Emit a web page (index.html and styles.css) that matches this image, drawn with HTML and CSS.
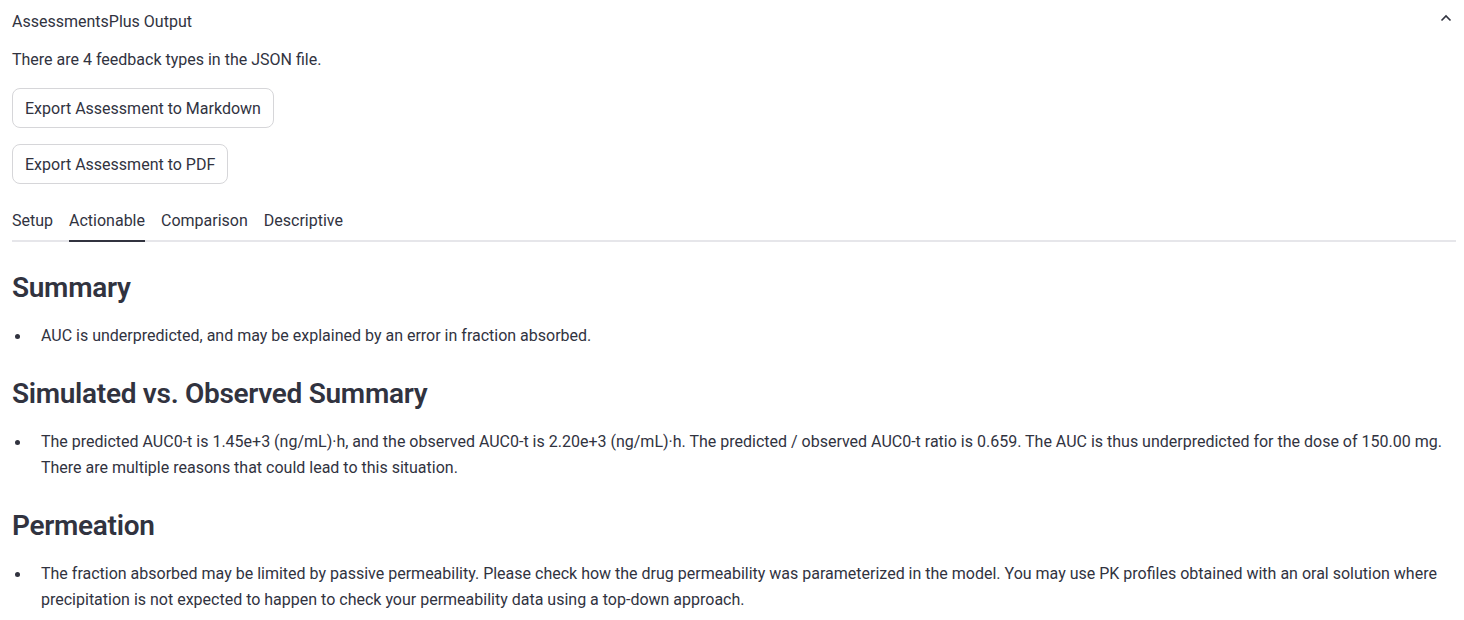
FILE: index.html
```html
<!DOCTYPE html>
<html lang="en">
<head>
    <meta charset="UTF-8">
    <meta name="viewport" content="width=device-width, initial-scale=1.0">
    <title>AssessmentsPlus Output</title>
    <link rel="stylesheet" href="styles.css">
</head>
<body>
    <div class="expander">
        <div class="expander-header">
            <span class="expander-title">AssessmentsPlus Output</span>
            <svg class="chevron" width="16" height="16" viewBox="0 0 16 16">
                <path d="M3.5 10.5 L8 6 L12.5 10.5" fill="none" stroke="#31333f" stroke-width="1.6"/>
            </svg>
        </div>
        <div class="expander-body">
            <p class="info">There are 4 feedback types in the JSON file.</p>
            <div class="btn-row"><button class="btn">Export Assessment to Markdown</button></div>
            <div class="btn-row"><button class="btn">Export Assessment to PDF</button></div>

            <div class="tabs">
                <span class="tab">Setup</span>
                <span class="tab active">Actionable</span>
                <span class="tab">Comparison</span>
                <span class="tab">Descriptive</span>
            </div>

            <div class="tab-content">
                <h2>Summary</h2>
                <ul>
                    <li>AUC is underpredicted, and may be explained by an error in fraction absorbed.</li>
                </ul>

                <h2>Simulated vs. Observed Summary</h2>
                <ul>
                    <li>The predicted AUC0-t is 1.45e+3 (ng/mL)·h, and the observed AUC0-t is 2.20e+3 (ng/mL)·h. The predicted / observed AUC0-t ratio is 0.659. The AUC is thus underpredicted for the dose of 150.00 mg. There are multiple reasons that could lead to this situation.</li>
                </ul>

                <h2>Permeation</h2>
                <ul>
                    <li>The fraction absorbed may be limited by passive permeability. Please check how the drug permeability was parameterized in the model. You may use PK profiles obtained with an oral solution where precipitation is not expected to happen to check your permeability data using a top-down approach.</li>
                </ul>
            </div>
        </div>
    </div>
</body>
</html>
```

FILE: styles.css
```css
body {
    margin: 0;
    background-color: #fff;
    color: #31333f;
    font-family: Roboto, "Liberation Sans", sans-serif;
    font-size: 16px;
}
.expander {
    padding: 0 8px 0 12px;
}
.expander-header {
    display: flex;
    align-items: center;
    justify-content: space-between;
    height: 42px;
    padding-right: 2px;
}
.expander-title {
    font-size: 16px;
}
.chevron {
    margin-top: -6px;
}
.info {
    margin: 6px 0 16px 0;
    line-height: 24px;
}
.btn-row {
    margin-bottom: 16px;
}
.btn {
    font-family: inherit;
    font-size: 16px;
    color: #31333f;
    background-color: #fff;
    border: 1px solid #d6d6d9;
    border-radius: 8px;
    height: 40px;
    padding: 0 12px;
    cursor: pointer;
}
.tabs {
    display: flex;
    gap: 16px;
    border-bottom: 2px solid #e6e6ea;
    margin-top: 4px;
}
.tab {
    padding: 9px 0 7px 0;
    line-height: 24px;
    margin-bottom: -2px;
    border-bottom: 2px solid transparent;
}
.tab.active {
    border-bottom-color: #31333f;
}
.tab-content h2 {
    font-size: 28px;
    font-weight: 600;
    margin: 0;
    line-height: 38px;
    padding: 26px 0 16px 0;
    letter-spacing: -0.3px;
}
.tab-content h2:first-child {
    padding-top: 27px;
}
.tab-content ul {
    margin: 0;
    padding-left: 29px;
    list-style: none;
}
.tab-content li {
    position: relative;
    line-height: 26px;
}
.tab-content li::before {
    content: "";
    position: absolute;
    left: -26px;
    top: 11px;
    width: 5px;
    height: 5px;
    border-radius: 50%;
    background-color: #31333f;
}
```
